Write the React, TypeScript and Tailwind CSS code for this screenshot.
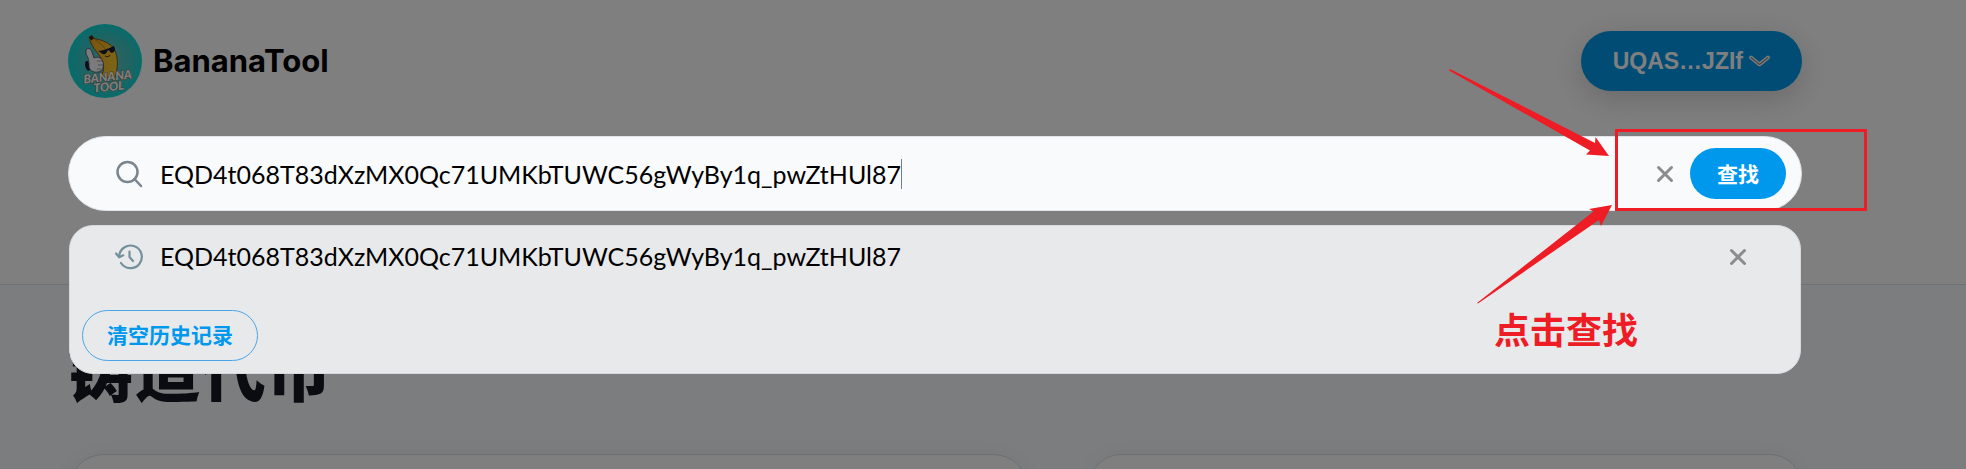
import { useState } from "react";

const ADDRESS = "EQD4t068T83dXzMX0Qc71UMKbTUWC56gWyBy1q_pwZtHUl87";

function Logo() {
  return (
    <svg viewBox="0 0 74 74" className="size-[74px] shrink-0" role="img" aria-label="BananaTool logo">
      <defs>
        <radialGradient id="logo-bg" cx="52%" cy="50%" r="55%">
          <stop offset="0" stopColor="#6fc4bd" />
          <stop offset="0.6" stopColor="#3cc8c6" />
          <stop offset="1" stopColor="#00dcdc" />
        </radialGradient>
        <linearGradient id="logo-skin" x1="0" y1="0" x2="1" y2="0.4">
          <stop offset="0" stopColor="#f2a71c" />
          <stop offset="1" stopColor="#f7c92e" />
        </linearGradient>
      </defs>
      <circle cx="37" cy="37" r="37" fill="url(#logo-bg)" />
      <path
        d="M21 13l3-1.500 2 3c5 1 14 3 19 9 6 8 5 20 2 30H33c4-9 3-14-1-21-3-5-8-9-10-16z"
        fill="url(#logo-skin)"
        stroke="#6b3f16"
        strokeWidth="0.800"
      />
      <path d="M26 15c5 3 10 7 13 13" fill="none" stroke="#c77d14" strokeWidth="1" />
      <path d="M21 13l3-1.500 2 3-3 2z" fill="#3a2514" />
      <path d="M30 27c5 0 11-3 16-5l1 3c0 3-3 5-5 3l-1-2-2 1c0 4-5 4-7 1z" fill="#1b1b3a" />
      <path d="M37 32c2 1 4 1 5-1" fill="none" stroke="#4a2a12" strokeWidth="1" />
      <path d="M18 37c-2 3-1 7 2 10l3-2-3-8z" fill="#1b1b3a" />
      <path
        d="M18 26c2-3 5-1 6 2l2 6c4-2 8 0 9 4 1 5 0 9-5 10-5 1-9-2-9-6 0-6-1-9-3-12z"
        fill="#f7f7f7"
        stroke="#3a3a50"
        strokeWidth="0.700"
      />
      <path d="M29 37h5M30 41h5M29 45h4" stroke="#77778a" strokeWidth="0.700" />
      <g
        fill="#ffffff"
        stroke="#8a6a58"
        strokeWidth="1"
        paintOrder="stroke"
        fontFamily="Lato, sans-serif"
        fontWeight="900"
        fontStyle="italic"
        textAnchor="middle"
        transform="rotate(-6 40 56)"
      >
        <text x="40" y="57" fontSize="12">BANANA</text>
        <text x="40" y="67" fontSize="12">TOOL</text>
      </g>
    </svg>
  );
}

function SearchIcon() {
  return (
    <svg viewBox="0 0 28 28" className="size-7 shrink-0" fill="none" stroke="#7b858e" strokeWidth="2.500" strokeLinecap="round" aria-hidden="true">
      <circle cx="12.500" cy="12" r="10" />
      <path d="M19.500 19l6.500 7" />
    </svg>
  );
}

function HistoryIcon() {
  return (
    <svg viewBox="0 0 28 28" className="size-7 shrink-0" fill="none" stroke="#75909d" strokeWidth="2.200" strokeLinecap="round" strokeLinejoin="round" aria-hidden="true">
      <path d="M4.200 13.500a11.300 11.300 0 1 1 1.800 6.500" />
      <path d="M1 10.500l3.200 3.800 4-2" />
      <path d="M14.500 8.500v5.500l3.500 4" />
    </svg>
  );
}

function CrossIcon() {
  return (
    <svg viewBox="0 0 18 18" className="size-[18px]" stroke="#8c8c8c" strokeWidth="3" strokeLinecap="round" aria-hidden="true">
      <path d="M2.500 2.500l13 13M15.500 2.500l-13 13" />
    </svg>
  );
}

function Annotations() {
  return (
    <div className="pointer-events-none absolute inset-0 z-30 text-[#ee1c25]">
      <svg className="absolute top-0 right-0 h-[469px] w-[566px]" viewBox="1400 0 566 469" fill="currentColor" aria-hidden="true">
        <path d="M1450 69L1595 143l.500-6L1609 156l-23-1.500 4-4-141-80z" />
        <path d="M1477 303l116.500-91.500-4.500-2.500 23-4-11 21-2-6-121 83.500z" />
      </svg>
      <div className="absolute top-[129px] right-[99px] h-[82px] w-[252px] border-3 border-current" />
      <p className="absolute top-[304px] right-[328px] text-[36px] leading-[52px] font-bold">点击查找</p>
    </div>
  );
}

export default function App() {
  const [query, setQuery] = useState(ADDRESS);
  return (
    <div className="relative flex h-screen flex-col overflow-hidden bg-[#f8fafc] font-['Lato','Noto_Sans_CJK_SC',sans-serif]">
      <div className="border-b border-[#dde6ec] bg-white pr-[164px] pb-[73px] pl-[68px]">
        <header className="flex items-center justify-between pt-6 pb-[38px]">
          <a href="#" className="flex items-center gap-[11px] font-['Inter',sans-serif] text-[31px] leading-[74px] font-bold text-black">
            <Logo />
            BananaTool
          </a>
          <button type="button" className="flex h-[60px] items-center gap-[6px] rounded-full bg-[#0098ea] px-8 font-['Liberation_Sans',sans-serif] text-[23px] font-bold text-white shadow-[0_8px_32px_rgba(0,0,0,0.180)]">
            UQAS…JZIf
            <svg viewBox="0 0 21 12" className="h-3 w-[21px]" fill="none" strokeLinecap="round" strokeLinejoin="round" aria-hidden="true">
              <path d="M2 2.500L10.500 9.500 19 2.500" stroke="#fff" strokeWidth="3.600" />
              <path d="M2 2.500L10.500 9.500 19 2.500" stroke="#9a7f7f" strokeWidth="1.200" />
            </svg>
          </button>
        </header>

        <div className="relative z-20">
          <form onSubmit={(e) => e.preventDefault()} className="flex h-[75px] items-center rounded-full border border-[#dfe5e9] bg-[#f8fafc] pr-[15px] pl-[46px]">
            <SearchIcon />
            <div className="ml-[17px] flex min-w-0 flex-1 items-center">
              <input
                aria-label="搜索"
                value={query}
                onChange={(e) => setQuery(e.target.value)}
                className="field-sizing-content h-10 max-w-full min-w-8 bg-transparent text-[25px] text-black caret-transparent outline-none"
              />
              <span className="h-[30px] w-px bg-[#6f7f8c]" />
            </div>
            <button type="button" aria-label="清除" onClick={() => setQuery("")} className="mr-4">
              <CrossIcon />
            </button>
            <button type="submit" className="h-[51px] w-24 rounded-full bg-[#0098ed] text-[21px] font-bold text-white">查找</button>
          </form>

          <div className="absolute top-[89px] right-px left-px h-[149px] rounded-3xl border border-[#d6dadd] bg-[#e7e9eb]">
            <div className="flex h-[62px] items-center pr-[53px] pl-[45px]">
              <HistoryIcon />
              <span className="ml-[17px] flex-1 text-[25px] text-black">{ADDRESS}</span>
              <button type="button" aria-label="删除">
                <CrossIcon />
              </button>
            </div>
            <button type="button" className="mt-[22px] ml-3 h-[51px] w-44 rounded-full border border-[#4aa5e8] pb-[2px] text-[21px] leading-7 font-bold text-[#0098ed]">清空历史记录</button>
          </div>
        </div>
      </div>

      <main className="flex min-h-0 flex-1 flex-col pt-[54px] pr-[164px] pl-[68px]">
        <h1 className="text-[66px] leading-[64px] font-black text-[#141824]">铸造代币</h1>
        <div className="mt-[51px] flex min-h-40 gap-[60px]">
          <section className="flex-[961] rounded-[36px] border border-[#d8dfe4] bg-white shadow-[0_0_20px_rgba(0,0,0,0.040)]" />
          <section className="flex-[713] rounded-[32px] border border-[#d8dfe4] bg-white shadow-[0_0_20px_rgba(0,0,0,0.040)]" />
        </div>
      </main>

      <div className="absolute inset-0 z-10 bg-black/50" />
      <Annotations />
    </div>
  );
}
